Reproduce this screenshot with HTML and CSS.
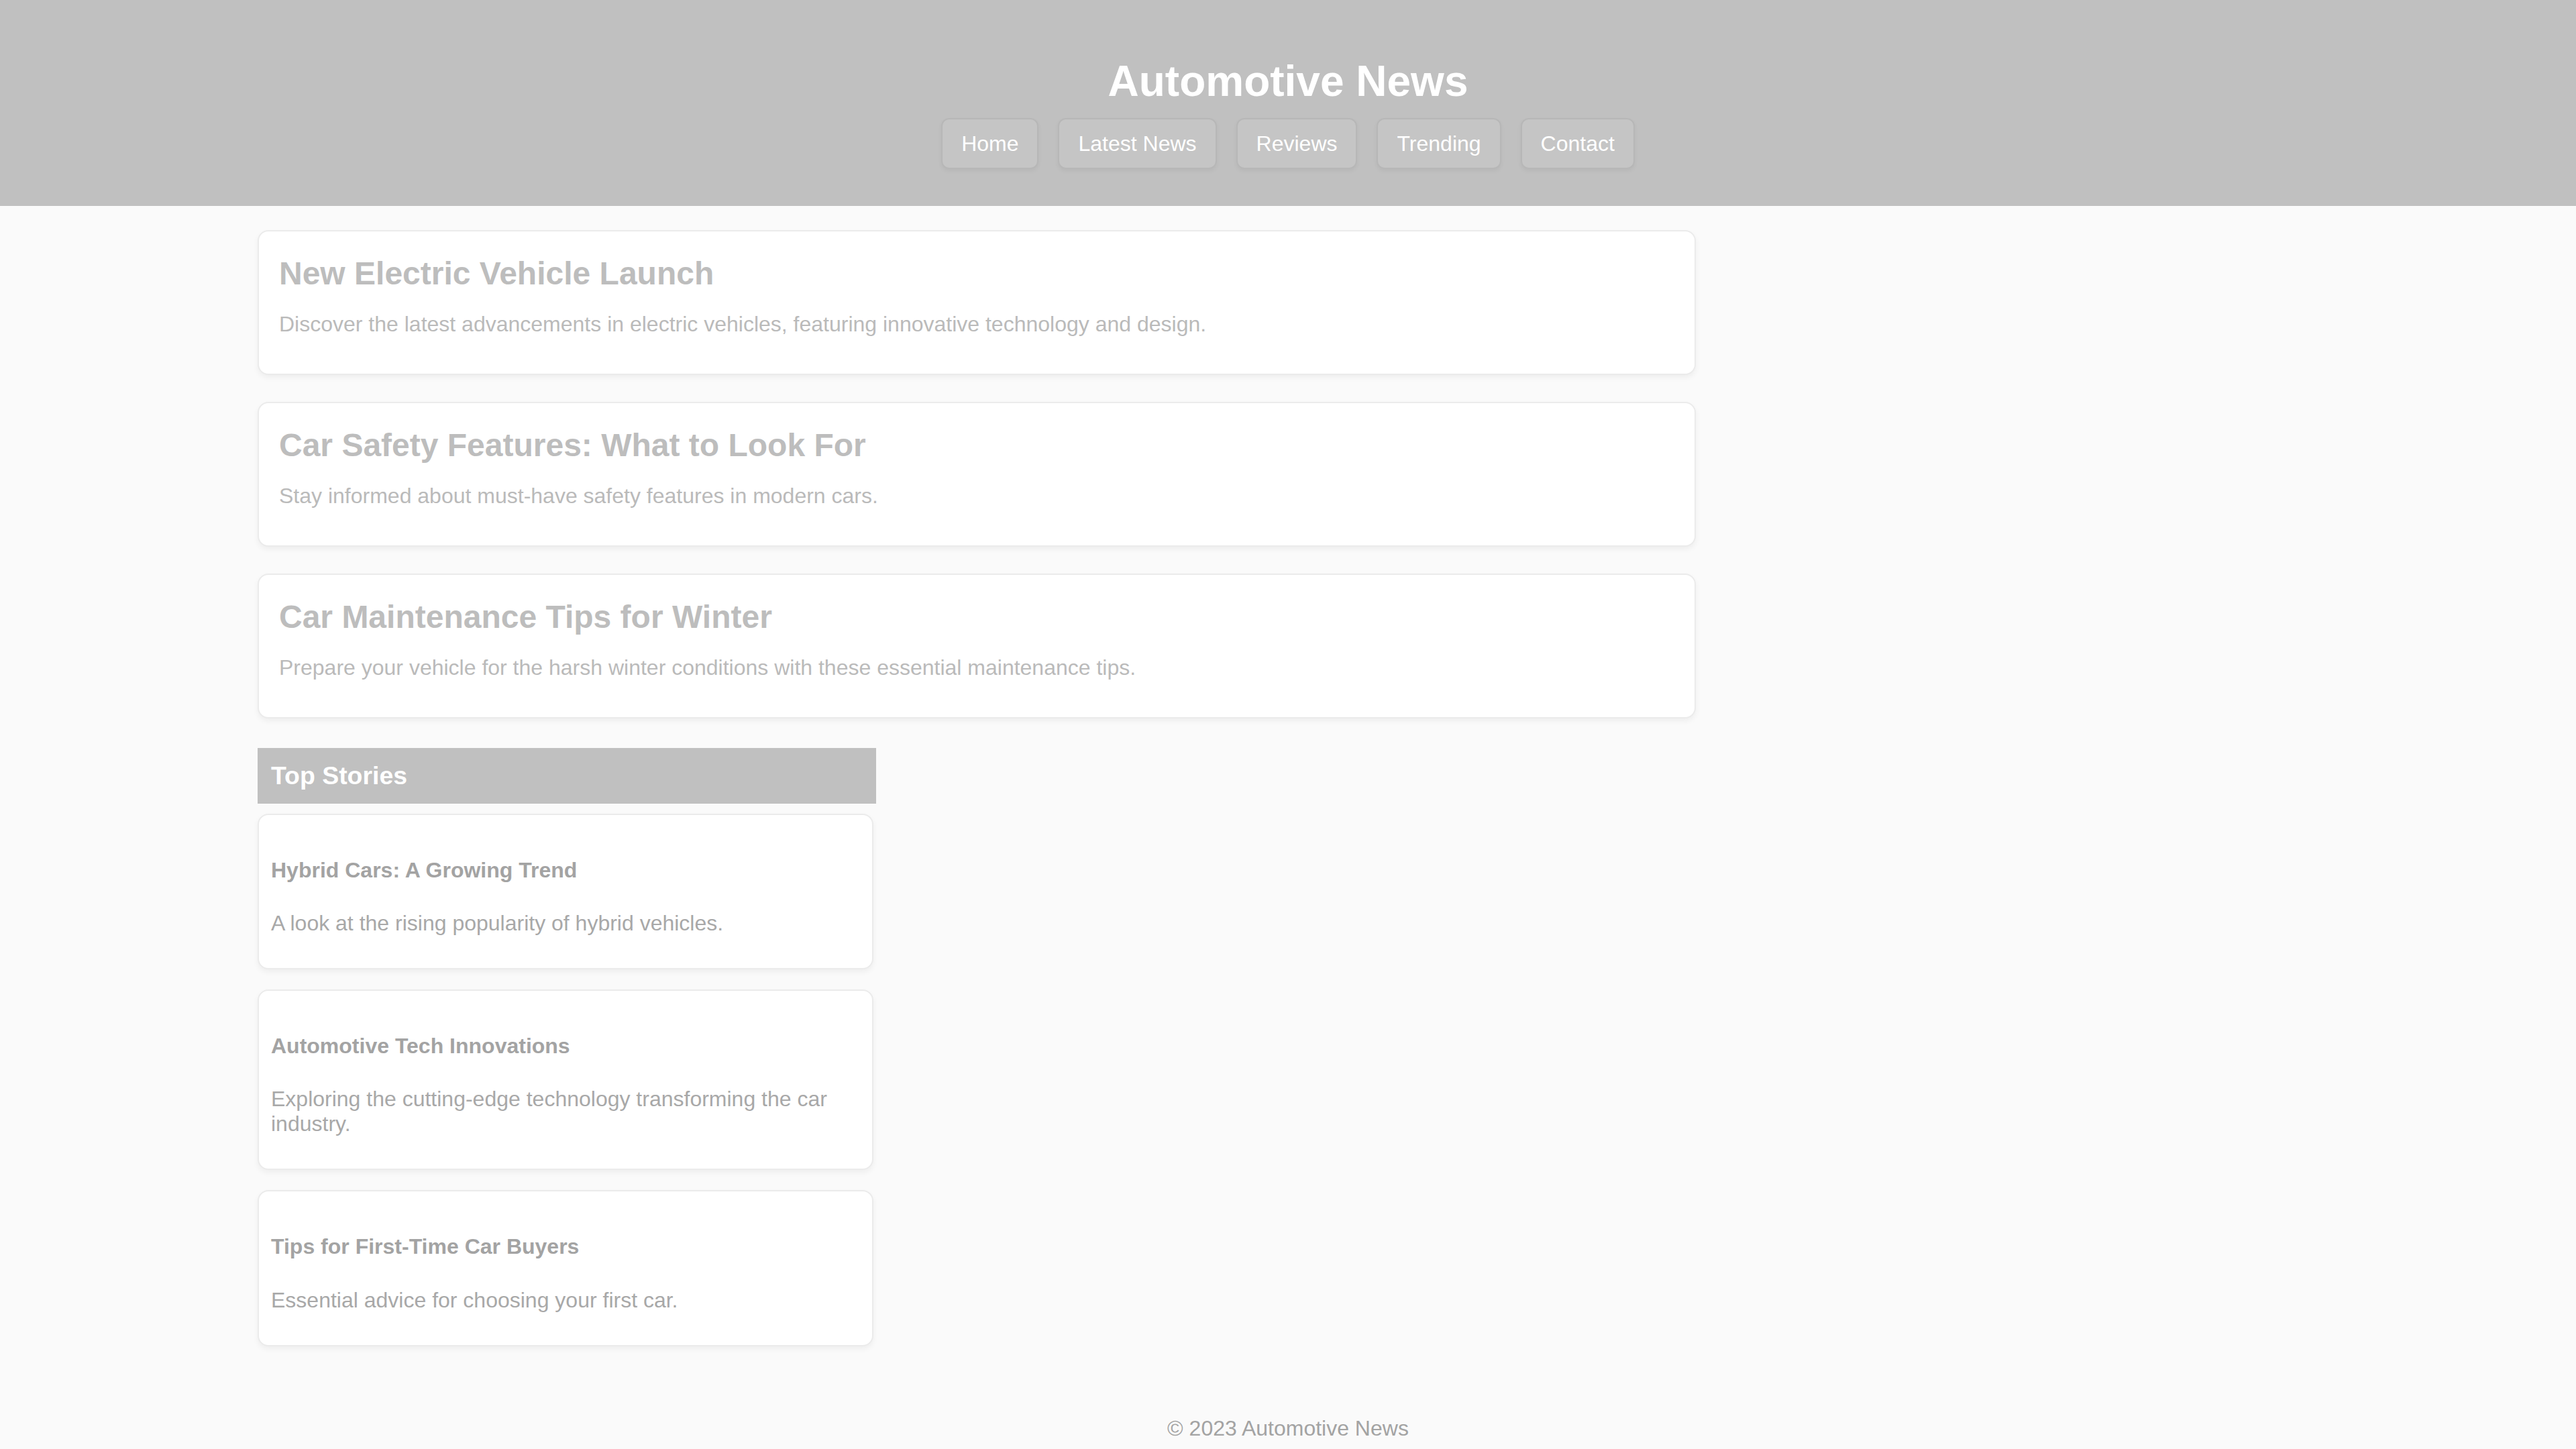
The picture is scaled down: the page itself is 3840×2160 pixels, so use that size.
FILE: index.html
```html
<!DOCTYPE html>
<html lang="en">
<head>
<meta charset="utf-8">
<title>Automotive News</title>
<link rel="stylesheet" href="styles.css">
</head>
<body>
<header class="site-header">
  <h1 class="site-title">Automotive News</h1>
  <nav class="site-nav">
    <a class="nav-link" href="#">Home</a>
    <a class="nav-link" href="#">Latest News</a>
    <a class="nav-link" href="#">Reviews</a>
    <a class="nav-link" href="#">Trending</a>
    <a class="nav-link" href="#">Contact</a>
  </nav>
</header>
<div class="container">
  <main class="main-col">
    <article class="article-card">
      <h2 class="article-title">New Electric Vehicle Launch</h2>
      <p class="article-text">Discover the latest advancements in electric vehicles, featuring innovative technology and design.</p>
    </article>
    <article class="article-card">
      <h2 class="article-title">Car Safety Features: What to Look For</h2>
      <p class="article-text">Stay informed about must-have safety features in modern cars.</p>
    </article>
    <article class="article-card">
      <h2 class="article-title">Car Maintenance Tips for Winter</h2>
      <p class="article-text">Prepare your vehicle for the harsh winter conditions with these essential maintenance tips.</p>
    </article>
  </main>
  <aside class="side-col">
    <h3 class="side-heading">Top Stories</h3>
    <div class="story-card">
      <h4 class="story-title">Hybrid Cars: A Growing Trend</h4>
      <p class="story-text">A look at the rising popularity of hybrid vehicles.</p>
    </div>
    <div class="story-card">
      <h4 class="story-title">Automotive Tech Innovations</h4>
      <p class="story-text">Exploring the cutting-edge technology transforming the car industry.</p>
    </div>
    <div class="story-card">
      <h4 class="story-title">Tips for First-Time Car Buyers</h4>
      <p class="story-text">Essential advice for choosing your first car.</p>
    </div>
  </aside>
</div>
<footer class="site-footer">
  <p class="footer-text">&copy; 2023 Automotive News</p>
</footer>
</body>
</html>
```

FILE: styles.css
```css
* {
  box-sizing: border-box;
}

body {
  margin: 0;
  background: #fafafa;
  font-family: "Liberation Sans", Arial, sans-serif;
  font-size: 32px;
  line-height: 37px;
  color: #a6a6a6;
}

.site-header {
  background: #c0c0c0;
  text-align: center;
  padding: 40px 0 55px;
}

.site-title {
  margin: 45px 0 19px;
  font-size: 64px;
  line-height: 72px;
  font-weight: bold;
  color: #ffffff;
}

.site-nav {
  display: flex;
  justify-content: center;
  gap: 29px;
}

.nav-link {
  display: block;
  padding: 18px 28px 17px;
  border: 2px solid rgba(0, 0, 0, 0.07);
  border-radius: 12px;
  background: rgba(255, 255, 255, 0.08);
  box-shadow: 0 3px 6px rgba(0, 0, 0, 0.05);
  color: #ffffff;
  text-decoration: none;
  font-size: 32px;
  line-height: 37px;
}

.container {
  width: 80%;
  margin: 36px auto;
}

.main-col {
  width: 70%;
  padding: 0 6px 4px 0;
}

.article-card {
  background: #ffffff;
  border: 2px solid #ebebeb;
  border-radius: 16px;
  box-shadow: 0 4px 8px rgba(0, 0, 0, 0.05);
  padding: 35px 30px 23px;
  margin-bottom: 40px;
}

.article-title {
  margin: 0 0 20px;
  font-size: 48px;
  line-height: 55px;
  font-weight: bold;
  color: #bdbdbd;
}

.article-text {
  margin: 30px 0 32px;
  color: #bababa;
}

.side-col {
  width: 30%;
}

.side-heading {
  margin: 0 0 15px;
  padding: 20px;
  background: #c0c0c0;
  color: #ffffff;
  font-size: 37.44px;
  line-height: 43px;
  font-weight: bold;
}

.story-card {
  background: #ffffff;
  border: 2px solid #ebebeb;
  border-radius: 16px;
  box-shadow: 0 4px 8px rgba(0, 0, 0, 0.05);
  padding: 21px 18px 16px;
  margin: 0 4px 30px 0;
}

.story-title {
  margin: 42.6px 0;
  font-size: 32px;
  line-height: 37px;
  font-weight: bold;
  color: #a3a3a3;
}

.story-text {
  margin: 32px 0;
  color: #a8a8a8;
}

.site-footer {
  text-align: center;
  padding: 68px 40px 10px;
}

.footer-text {
  margin: 0;
  color: #a3a3a3;
}
```
